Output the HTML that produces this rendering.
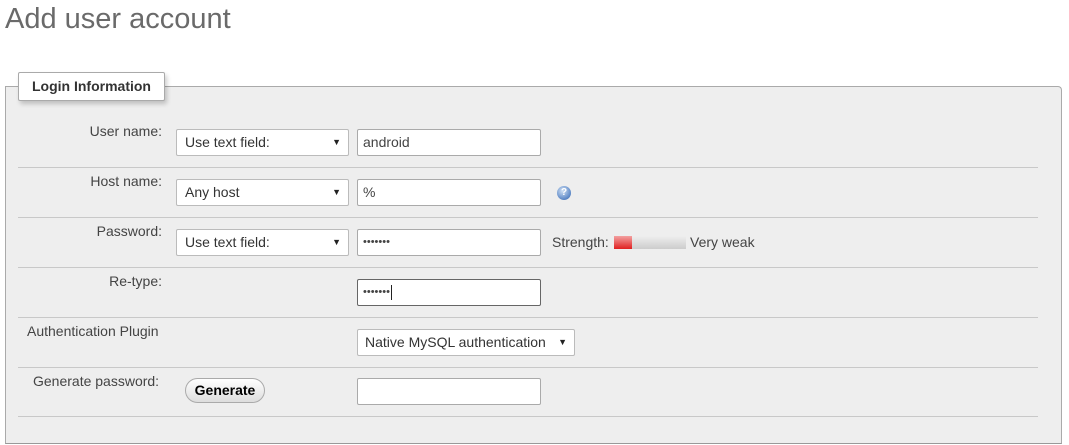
<!DOCTYPE html>
<html><head><meta charset="utf-8"><style>
body{margin:0;width:1069px;height:445px;background:#fff;font-family:"Liberation Sans",Arial,sans-serif;position:relative;overflow:hidden;color:#444}
.a{position:absolute}
h1{position:absolute;left:5px;top:3px;margin:0;font-weight:normal;font-size:29px;color:#6a6a6a}
.fs{left:5px;top:86px;width:1055px;height:356px;background:#eee;border:1px solid #aaa;border-radius:0 4px 0 0;border-bottom-color:#999}
.lg{left:18px;top:72px;width:145px;height:27px;background:#fff;border:1px solid #aaa;border-radius:2px;box-shadow:2px 3px 5px rgba(0,0,0,.2);font-weight:bold;font-size:14px;line-height:27px;text-align:center;color:#333}
.sep{left:18px;width:1020px;height:1px;background:#c8c8c8}
.lb{font-size:14px;color:#444;text-align:right;width:162px;left:0}
.sel{background:#fff;border:1px solid #bbb;border-radius:2px;font-size:14px;line-height:25px;padding-left:8px;box-sizing:border-box;height:27px;color:#333}
.sel:after{content:"▼";position:absolute;right:7px;top:0;font-size:9px;color:#222}
.in{background:#fff;border:1px solid #aaa;border-radius:2px;height:27px;width:184px;box-sizing:border-box;font-size:14px;line-height:25px;padding-left:5px;color:#444}
.dots{font-size:11px;letter-spacing:0}
</style></head><body>
<h1>Add user account</h1>
<div class="a fs"></div>
<div class="a lg">Login Information</div>
<div class="a sep" style="top:167px"></div>
<div class="a sep" style="top:217px"></div>
<div class="a sep" style="top:267px"></div>
<div class="a sep" style="top:317px"></div>
<div class="a sep" style="top:367px"></div>
<div class="a sep" style="top:416px"></div>

<div class="a lb" style="top:123px">User name:</div>
<div class="a sel" style="left:176px;top:129px;width:173px">Use text field:</div>
<div class="a in" style="left:357px;top:129px">android</div>

<div class="a lb" style="top:173px">Host name:</div>
<div class="a sel" style="left:176px;top:179px;width:173px">Any host</div>
<div class="a in" style="left:357px;top:179px">%</div>
<div class="a" style="left:557px;top:186px;width:14px;height:14px;border-radius:50%;background:radial-gradient(circle at 40% 35%,#cfe0f5,#5a86c5 70%,#3a62a0);color:#fff;font-size:10px;font-weight:bold;text-align:center;line-height:14px">?</div>

<div class="a lb" style="top:223px">Password:</div>
<div class="a sel" style="left:176px;top:229px;width:173px">Use text field:</div>
<div class="a in dots" style="left:357px;top:229px">•••••••</div>
<div class="a" style="left:552px;top:234px;font-size:14px">Strength:</div>
<div class="a" style="left:614px;top:236px;width:72px;height:13px;background:linear-gradient(#eee,#ccc)"></div>
<div class="a" style="left:614px;top:236px;width:18px;height:13px;background:linear-gradient(#f3a0a0,#e02020)"></div>
<div class="a" style="left:690px;top:234px;font-size:14px">Very weak</div>

<div class="a lb" style="top:273px">Re-type:</div>
<div class="a in dots" style="left:357px;top:279px;border-color:#666">•••••••<span style="display:inline-block;width:1px;height:15px;background:#222;vertical-align:middle;margin-left:1px"></span></div>

<div class="a" style="left:27px;top:323px;font-size:14px">Authentication Plugin</div>
<div class="a sel" style="left:357px;top:329px;width:218px;padding-left:7px;padding-right:20px">Native MySQL authentication</div>

<div class="a" style="left:33px;top:373px;font-size:14px">Generate password:</div>
<div class="a" style="left:185px;top:378px;width:80px;height:25px;box-sizing:border-box;border:1px solid #aaa;border-radius:13px;background:linear-gradient(#fff,#ddd);font-weight:bold;font-size:14px;text-align:center;line-height:23px;color:#000">Generate</div>
<div class="a in" style="left:357px;top:378px"></div>
</body></html>
